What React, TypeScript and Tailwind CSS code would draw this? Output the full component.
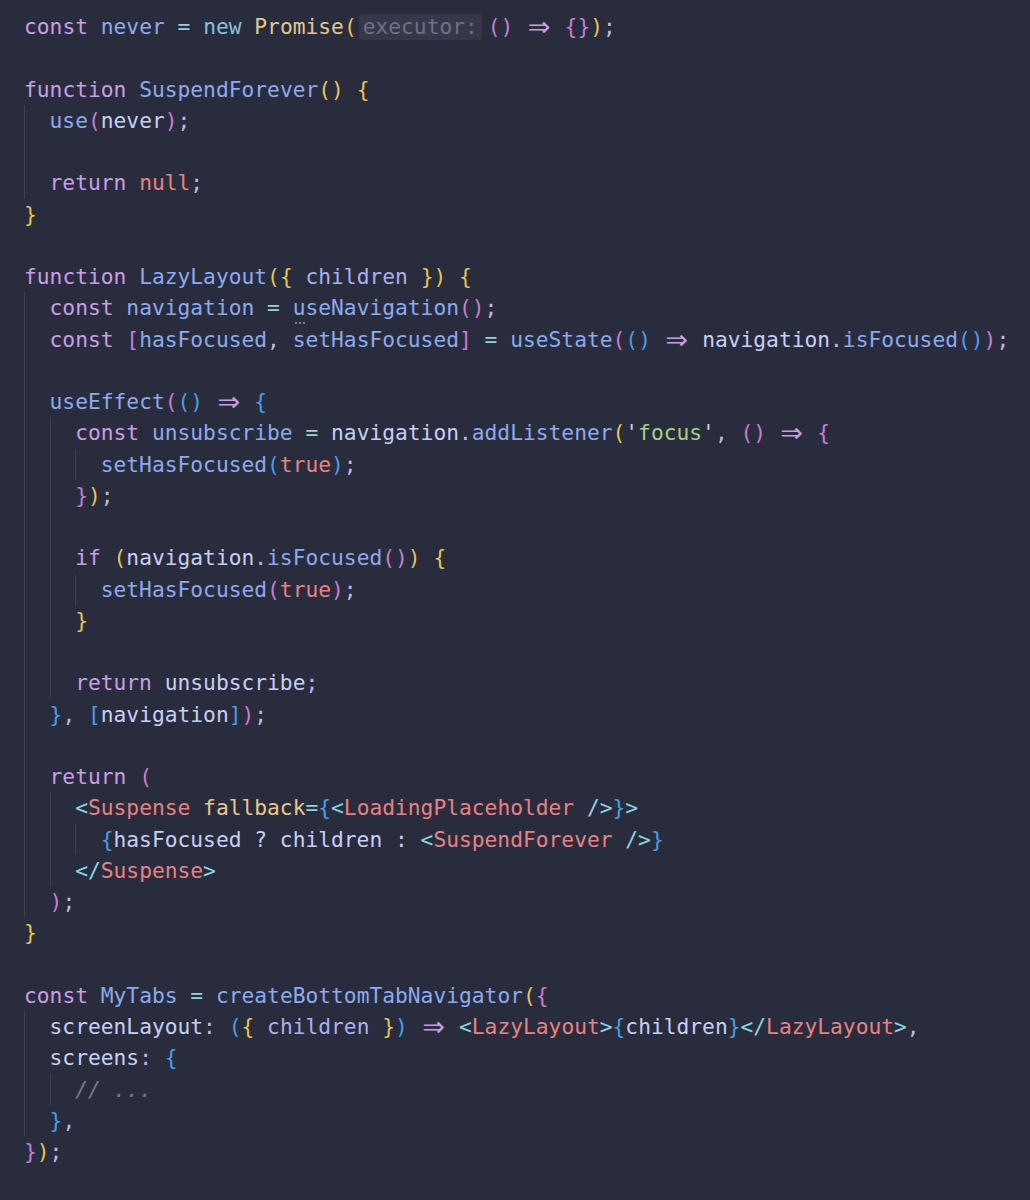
import React from "react";

type Tok = [string, string];
type Line = { g: number; t: Tok[] };

// colour keys -> full tailwind classes
const C: Record<string, string> = {
  kw: "text-[#ca9ee6]",
  fn: "text-[#8caaee]",
  vd: "text-[#8caaee]",
  tx: "text-[#c6d0f5]",
  nw: "text-[#85c1dc]",
  ty: "text-[#e5c890]",
  rd: "text-[#e78284]",
  gr: "text-[#a6d189]",
  op: "text-[#99d1db]",
  sk: "text-[#8bd5e6]",
  pa: "text-[#a9b1ee]",
  at: "text-[#e5c890]",
  pu: "text-[#b5bfe2]",
  cm: "text-[#737994] italic",
  Y: "text-[#e6c453]",
  P: "text-[#c77dd2]",
  B: "text-[#4a9ee8]",
  ar: "text-[#ca9ee6]",
};

const S: Tok = [" ", "tx"];
const A: Tok = ["=>", "ar"];
const H: Tok = ["executor:", "hint"];
const U: Tok = ["useNavigation", "dots"];

const LINES: Line[] = [
  { g: 0, t: [["const", "kw"], S, ["never", "vd"], S, ["=", "op"], S, ["new", "nw"], S, ["Promise", "ty"], ["(", "Y"], H, ["()", "P"], S, A, S, ["{}", "P"], [")", "Y"], [";", "pu"]] },
  { g: 0, t: [] },
  { g: 0, t: [["function", "kw"], S, ["SuspendForever", "fn"], ["()", "Y"], S, ["{", "Y"]] },
  { g: 1, t: [["use", "fn"], ["(", "P"], ["never", "tx"], [")", "P"], [";", "pu"]] },
  { g: 1, t: [] },
  { g: 1, t: [["return", "kw"], S, ["null", "rd"], [";", "pu"]] },
  { g: 0, t: [["}", "Y"]] },
  { g: 0, t: [] },
  { g: 0, t: [["function", "kw"], S, ["LazyLayout", "fn"], ["({", "Y"], S, ["children", "pa"], S, ["})", "Y"], S, ["{", "Y"]] },
  { g: 1, t: [["const", "kw"], S, ["navigation", "vd"], S, ["=", "op"], S, U, ["()", "P"], [";", "pu"]] },
  { g: 1, t: [["const", "kw"], S, ["[", "P"], ["hasFocused", "vd"], [", ", "pu"], ["setHasFocused", "vd"], ["]", "P"], S, ["=", "op"], S, ["useState", "fn"], ["(", "P"], ["()", "B"], S, A, S, ["navigation", "tx"], [".", "pu"], ["isFocused", "fn"], ["()", "B"], [")", "P"], [";", "pu"]] },
  { g: 1, t: [] },
  { g: 1, t: [["useEffect", "fn"], ["(", "P"], ["()", "B"], S, A, S, ["{", "B"]] },
  { g: 2, t: [["const", "kw"], S, ["unsubscribe", "vd"], S, ["=", "op"], S, ["navigation", "tx"], [".", "pu"], ["addListener", "fn"], ["(", "Y"], ["'", "tx"], ["focus", "gr"], ["'", "tx"], [", ", "pu"], ["()", "P"], S, A, S, ["{", "P"]] },
  { g: 3, t: [["setHasFocused", "fn"], ["(", "B"], ["true", "rd"], [")", "B"], [";", "pu"]] },
  { g: 2, t: [["}", "P"], [")", "Y"], [";", "pu"]] },
  { g: 2, t: [] },
  { g: 2, t: [["if", "kw"], S, ["(", "Y"], ["navigation", "tx"], [".", "pu"], ["isFocused", "fn"], ["()", "P"], [")", "Y"], S, ["{", "Y"]] },
  { g: 3, t: [["setHasFocused", "fn"], ["(", "P"], ["true", "rd"], [")", "P"], [";", "pu"]] },
  { g: 2, t: [["}", "Y"]] },
  { g: 2, t: [] },
  { g: 2, t: [["return", "kw"], S, ["unsubscribe", "tx"], [";", "pu"]] },
  { g: 1, t: [["}", "B"], [", ", "pu"], ["[", "B"], ["navigation", "tx"], ["]", "B"], [")", "P"], [";", "pu"]] },
  { g: 1, t: [] },
  { g: 1, t: [["return", "kw"], S, ["(", "P"]] },
  { g: 2, t: [["<", "sk"], ["Suspense", "rd"], S, ["fallback", "at"], ["=", "sk"], ["{", "B"], ["<", "sk"], ["LoadingPlaceholder", "rd"], S, ["/>", "sk"], ["}", "B"], [">", "sk"]] },
  { g: 3, t: [["{", "B"], ["hasFocused", "tx"], S, ["?", "tx"], S, ["children", "tx"], S, [":", "tx"], S, ["<", "sk"], ["SuspendForever", "rd"], S, ["/>", "sk"], ["}", "B"]] },
  { g: 2, t: [["</", "sk"], ["Suspense", "rd"], [">", "sk"]] },
  { g: 1, t: [[")", "P"], [";", "pu"]] },
  { g: 0, t: [["}", "Y"]] },
  { g: 0, t: [] },
  { g: 0, t: [["const", "kw"], S, ["MyTabs", "vd"], S, ["=", "op"], S, ["createBottomTabNavigator", "fn"], ["(", "Y"], ["{", "P"]] },
  { g: 1, t: [["screenLayout", "tx"], [":", "pu"], S, ["(", "B"], ["{", "Y"], S, ["children", "pa"], S, ["}", "Y"], [")", "B"], S, A, S, ["<", "sk"], ["LazyLayout", "rd"], [">", "sk"], ["{", "B"], ["children", "tx"], ["}", "B"], ["</", "sk"], ["LazyLayout", "rd"], [">", "sk"], [",", "pu"]] },
  { g: 1, t: [["screens", "tx"], [":", "pu"], S, ["{", "B"]] },
  { g: 2, t: [["//", "cm"], S, ["...", "cm"]] },
  { g: 1, t: [["}", "B"], [",", "pu"]] },
  { g: 0, t: [["}", "P"], [")", "Y"], [";", "pu"]] },
];

function Token({ tok }: { tok: Tok }) {
  const [text, kind] = tok;
  if (kind === "ar") {
    // stands in for the => ligature, two cells wide
    return (
      <span className="inline-flex justify-center w-[25.6px] text-[#ca9ee6] font-['DejaVu_Sans',sans-serif] text-[27px] leading-none">
        ⇒
      </span>
    );
  }
  if (kind === "hint") {
    return (
      <span className="inline-block ml-[2px] mr-[6px] px-[4px] rounded-[4px] bg-[#353849] text-[#6c7189] leading-[26px]">
        {text}
      </span>
    );
  }
  if (kind === "dots") {
    return (
      <span className="text-[#8caaee]">
        <span className="relative inline-block">
          u
          <span className="absolute left-[2px] bottom-[0px] flex gap-[2px]">
            <span className="w-[2px] h-[2px] rounded-full bg-[#9aa0b8]" />
            <span className="w-[2px] h-[2px] rounded-full bg-[#9aa0b8]" />
            <span className="w-[2px] h-[2px] rounded-full bg-[#9aa0b8]" />
          </span>
        </span>
        {text.slice(1)}
      </span>
    );
  }
  return <span className={C[kind]}>{text}</span>;
}

export default function App() {
  return (
    <div className="min-h-[1200px] w-full bg-[#292c3c] pt-[11px] pl-[24px] font-['DejaVu_Sans_Mono',monospace] text-[21.25px] whitespace-pre">
      {LINES.map((line, i) => (
        <div key={i} className="flex h-[31.25px] leading-[31.25px] items-stretch">
          {Array.from({ length: line.g }).map((_, j) => (
            <span key={j} className="inline-block w-[2ch] shrink-0 border-l border-[#3e4257]" />
          ))}
          <span className="flex items-center">
            {line.t.map((tok, k) => (
              <Token key={k} tok={tok} />
            ))}
          </span>
        </div>
      ))}
    </div>
  );
}
